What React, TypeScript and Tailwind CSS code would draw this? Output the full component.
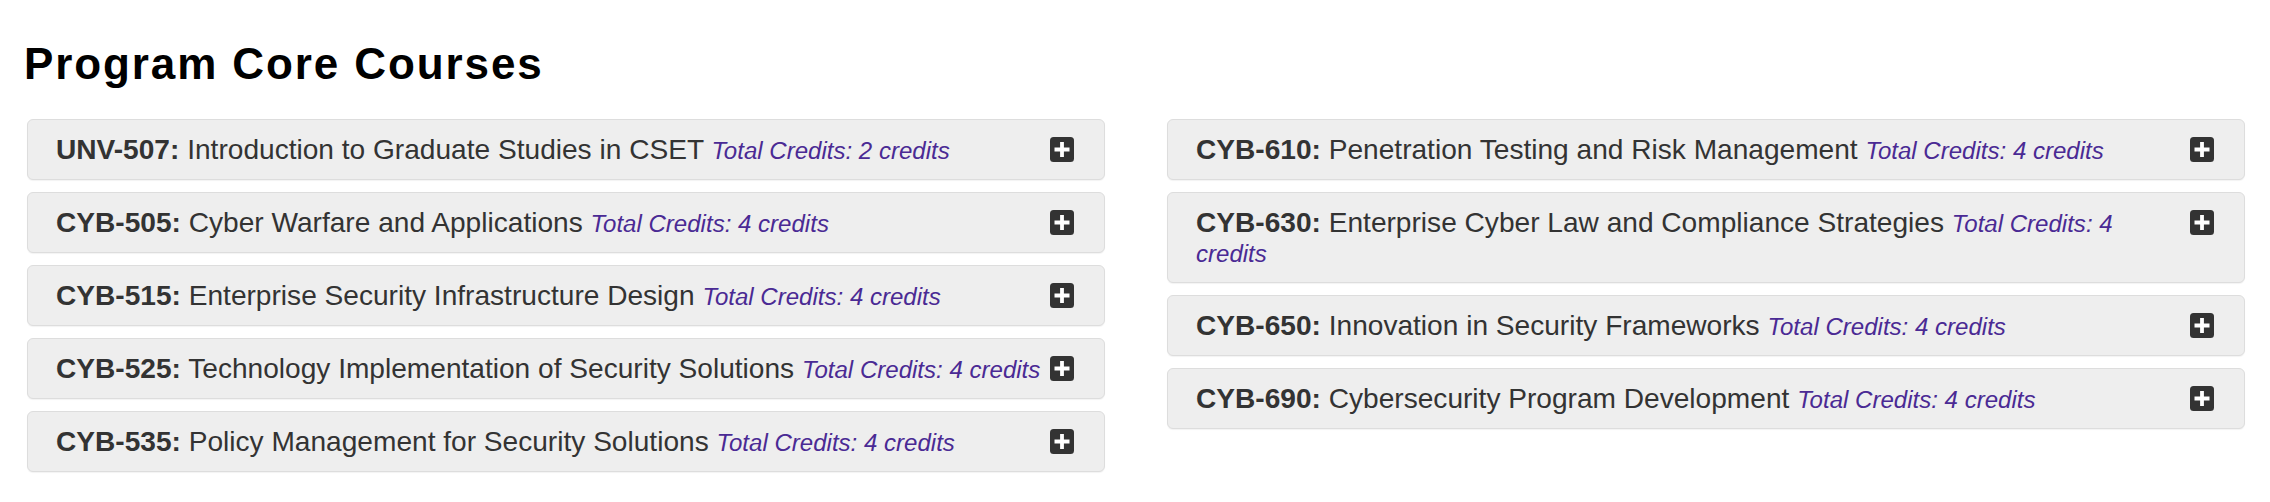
type Course = { code: string; title: string; credits: number };

const leftCourses: Course[] = [
  { code: 'UNV-507', title: 'Introduction to Graduate Studies in CSET', credits: 2 },
  { code: 'CYB-505', title: 'Cyber Warfare and Applications', credits: 4 },
  { code: 'CYB-515', title: 'Enterprise Security Infrastructure Design', credits: 4 },
  { code: 'CYB-525', title: 'Technology Implementation of Security Solutions', credits: 4 },
  { code: 'CYB-535', title: 'Policy Management for Security Solutions', credits: 4 },
];

const rightCourses: Course[] = [
  { code: 'CYB-610', title: 'Penetration Testing and Risk Management', credits: 4 },
  { code: 'CYB-630', title: 'Enterprise Cyber Law and Compliance Strategies', credits: 4 },
  { code: 'CYB-650', title: 'Innovation in Security Frameworks', credits: 4 },
  { code: 'CYB-690', title: 'Cybersecurity Program Development', credits: 4 },
];

function PlusSquare() {
  return (
    <svg width="24" height="25" viewBox="0 0 24 25" className="shrink-0 mt-[2px] ml-[7px]">
      <rect x="0" y="0" width="24" height="25" rx="3.5" fill="#333333" />
      <path d="M12 5v15M4.5 12.5h15" stroke="#ffffff" strokeWidth="3.8" />
    </svg>
  );
}

function CourseRow({ course }: { course: Course }) {
  return (
    <div className="flex items-start bg-[#eeeeee] border border-[#dddddd] rounded-[6px] shadow-[0_1px_1px_rgba(0,0,0,0.05)] pl-[28px] pr-[30px] py-[14.5px] mb-[12px]">
      <p className="flex-1 min-w-0 text-[28.1px] leading-[29px] text-[#333333]">
        <span className="font-bold">{course.code}:</span> {course.title}{' '}
        <em className="text-[24.05px] text-[#4a2a94]">Total Credits: {course.credits} credits</em>
      </p>
      <PlusSquare />
    </div>
  );
}

export default function App() {
  return (
    <div className="bg-white min-h-screen font-['Liberation_Sans',Arial,sans-serif] pt-[39px]">
      <h2 className="pl-[24px] text-[44px] leading-[50px] font-bold tracking-[1.9px] text-black">
        Program Core Courses
      </h2>
      <div className="grid grid-cols-[1078px_1078px] gap-x-[62px] pl-[27px] mt-[30px]">
        <div>
          {leftCourses.map((c) => (
            <CourseRow key={c.code} course={c} />
          ))}
        </div>
        <div>
          {rightCourses.map((c) => (
            <CourseRow key={c.code} course={c} />
          ))}
        </div>
      </div>
    </div>
  );
}
